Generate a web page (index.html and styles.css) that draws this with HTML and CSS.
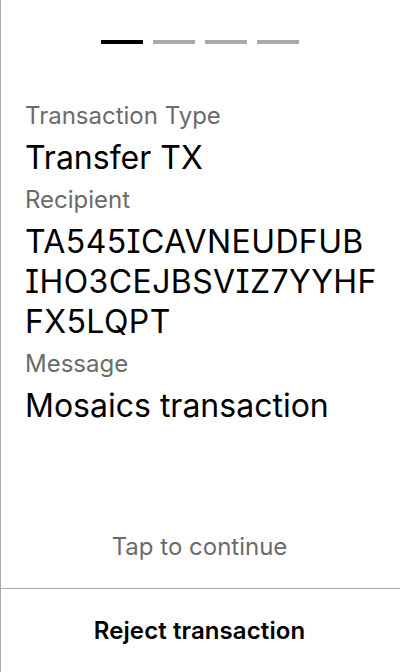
FILE: index.html
```html
<!DOCTYPE html>
<html>
<head>
<meta charset="utf-8">
<link rel="stylesheet" href="styles.css">
</head>
<body>
<div class="screen">
  <div class="steps">
    <span class="step active"></span>
    <span class="step"></span>
    <span class="step"></span>
    <span class="step"></span>
  </div>
  <div class="details">
    <div class="label">Transaction Type</div>
    <div class="value">Transfer TX</div>
    <div class="label">Recipient</div>
    <div class="value address"><span class="line">TA545ICAVNEUDFUB</span><span class="line">IHO3CEJBSVIZ7YYHF</span><span class="line">FX5LQPT</span></div>
    <div class="label">Message</div>
    <div class="value">Mosaics transaction</div>
  </div>
  <div class="hint">Tap to continue</div>
  <div class="reject">Reject transaction</div>
</div>
</body>
</html>
```
FILE: styles.css
```css
html, body {
  margin: 0;
  padding: 0;
  background: #fff;
}
.screen {
  box-sizing: border-box;
  height: 672px;
  width: 400px;
  border-left: 1px solid #aaaaaa;
  display: flex;
  flex-direction: column;
  font-family: "Inter", "Liberation Sans", sans-serif;
  color: #000;
}
.steps {
  display: flex;
  justify-content: center;
  gap: 10px;
  padding-top: 40px;
  padding-right: 2px;
}
.step {
  width: 42px;
  height: 4px;
  background: #aaaaaa;
}
.step.active {
  background: #000;
}
.details {
  padding: 50px 10px 0 24px;
  display: flex;
  flex-direction: column;
}
.label {
  font-size: 24px;
  line-height: 44px;
  color: #6b6b6b;
}
.value {
  font-size: 32px;
  line-height: 40px;
}
.address {
  font-feature-settings: "cv08";
  letter-spacing: 0.4px;
}
.line {
  display: block;
}
.hint {
  margin-top: auto;
  text-align: center;
  font-size: 24px;
  color: #6b6b6b;
  padding-right: 2px;
  padding-bottom: 27px;
}
.reject {
  border-top: 1px solid #aaaaaa;
  height: 83px;
  display: flex;
  align-items: center;
  justify-content: center;
  font-size: 24px;
  font-weight: 600;
  letter-spacing: 0.1px;
  padding-right: 2px;
}
```
